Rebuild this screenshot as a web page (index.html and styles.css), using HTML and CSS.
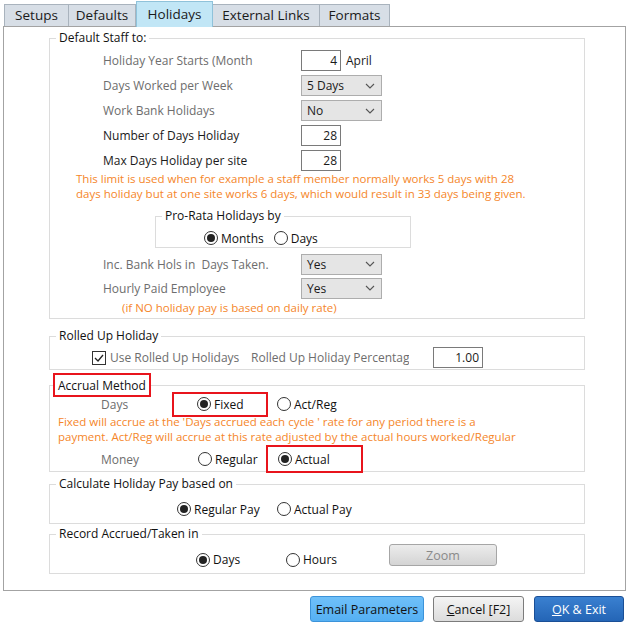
FILE: index.html
```html
<!DOCTYPE html>
<html lang="en">
<head>
    <meta charset="UTF-8">
    <title>Parameters - Holidays</title>
    <link rel="stylesheet" href="styles.css">
</head>
<body>
    <div class="window">
        <div class="tabs">
            <div class="tab tab-setups">Setups</div>
            <div class="tab tab-defaults">Defaults</div>
            <div class="tab tab-holidays active">Holidays</div>
            <div class="tab tab-links">External Links</div>
            <div class="tab tab-formats">Formats</div>
        </div>

        <div class="panel">
            <!-- default staff settings -->
            <fieldset class="group staff">
                <legend>Default Staff to:</legend>
                <div class="row">
                    <span class="lbl">Holiday Year Starts (Month</span>
                    <span class="field">4</span>
                    <span class="after">April</span>
                </div>
                <div class="row">
                    <span class="lbl">Days Worked per Week</span>
                    <span class="combo">5 Days<svg width="10" height="6" viewBox="0 0 10 6"><path d="M1 1l4 4 4-4" fill="none" stroke="#555" stroke-width="1.1"/></svg></span>
                </div>
                <div class="row">
                    <span class="lbl">Work Bank Holidays</span>
                    <span class="combo">No<svg width="10" height="6" viewBox="0 0 10 6"><path d="M1 1l4 4 4-4" fill="none" stroke="#555" stroke-width="1.1"/></svg></span>
                </div>
                <div class="row">
                    <span class="lbl dark">Number of Days Holiday</span>
                    <span class="field">28</span>
                </div>
                <div class="row">
                    <span class="lbl dark">Max Days Holiday per site</span>
                    <span class="field">28</span>
                </div>
                <p class="note note-limit">This limit is used when for example a staff member normally works 5 days with 28<br>days holiday but at one site works 6 days, which would result in 33 days being given.</p>

                <fieldset class="group prorata">
                    <legend>Pro-Rata Holidays by</legend>
                    <div class="radios prorata-opts">
                        <label class="radio on opt-months"><span class="dot"></span>Months</label>
                        <label class="radio"><span class="dot"></span>Days</label>
                    </div>
                </fieldset>

                <div class="row row-sm first">
                    <span class="lbl">Inc. Bank Hols in&nbsp; Days Taken.</span>
                    <span class="combo">Yes<svg width="10" height="6" viewBox="0 0 10 6"><path d="M1 1l4 4 4-4" fill="none" stroke="#555" stroke-width="1.1"/></svg></span>
                </div>
                <div class="row row-sm">
                    <span class="lbl">Hourly Paid Employee</span>
                    <span class="combo">Yes<svg width="10" height="6" viewBox="0 0 10 6"><path d="M1 1l4 4 4-4" fill="none" stroke="#555" stroke-width="1.1"/></svg></span>
                </div>
                <p class="note note-hourly">(if NO holiday pay is based on daily rate)</p>
            </fieldset>

            <!-- rolled up holiday -->
            <fieldset class="group rolled">
                <legend>Rolled Up Holiday</legend>
                <div class="rolled-row">
                    <label class="check"><span class="box"><svg width="12" height="12" viewBox="0 0 12 12"><path d="M2 6l3 3 5-6" fill="none" stroke="#222" stroke-width="1.3"/></svg></span>Use Rolled Up Holidays</label>
                    <span class="clip">Rolled Up Holiday Percentage</span>
                    <span class="field wide">1.00</span>
                </div>
            </fieldset>

            <!-- accrual method -->
            <fieldset class="group accrual">
                <legend class="mark">Accrual Method</legend>
                <div class="acc-row acc-days">
                    <span class="acc-lbl">Days</span>
                    <span class="cell cell-fixed mark"><label class="radio on"><span class="dot"></span>Fixed</label></span>
                    <label class="radio opt-actreg"><span class="dot"></span>Act/Reg</label>
                </div>
                <p class="note note-accrual">Fixed will accrue at the 'Days accrued each cycle ' rate for any period there is a<br>payment. Act/Reg will accrue at this rate adjusted by the actual hours worked/Regular</p>
                <div class="acc-row acc-money">
                    <span class="acc-lbl money-lbl">Money</span>
                    <span class="cell cell-regular"><label class="radio"><span class="dot"></span>Regular</label></span>
                    <span class="cell cell-actual mark"><label class="radio on"><span class="dot"></span>Actual</label></span>
                </div>
            </fieldset>

            <!-- holiday pay basis -->
            <fieldset class="group calc">
                <legend>Calculate Holiday Pay based on</legend>
                <div class="radios calc-opts">
                    <span class="cell cell-regpay"><label class="radio on"><span class="dot"></span>Regular Pay</label></span>
                    <label class="radio"><span class="dot"></span>Actual Pay</label>
                </div>
            </fieldset>

            <!-- units -->
            <fieldset class="group record">
                <legend>Record Accrued/Taken in</legend>
                <div class="record-row">
                    <span class="cell cell-days"><label class="radio on"><span class="dot"></span>Days</label></span>
                    <span class="cell cell-hours"><label class="radio"><span class="dot"></span>Hours</label></span>
                    <button class="btn-zoom" disabled>Zoom</button>
                </div>
            </fieldset>
        </div>

        <div class="actions">
            <button class="btn btn-email">Email Parameters</button>
            <button class="btn btn-cancel"><u>C</u>ancel [F2]</button>
            <button class="btn btn-ok"><u>O</u>K &amp; Exit</button>
        </div>
    </div>
</body>
</html>
```

FILE: styles.css
```css
body {
    margin: 0;
    background: #fff;
    font-family: "Segoe UI", "Open Sans", sans-serif;
    font-size: 12px;
    color: #1a1a1a;
}
.window {
    width: 630px;
    height: 632px;
    padding-top: 1px;
    box-sizing: border-box;
}

/* tab strip */
.tabs {
    display: flex;
    align-items: flex-end;
    height: 25px;
    margin-left: 4px;
}
.tab {
    height: 22px;
    line-height: 21px;
    font-size: 13.5px;
    text-align: center;
    color: #1a1a1a;
    background: #d7dee6;
    border: 1px solid #a9b3bd;
    border-bottom: none;
    box-sizing: border-box;
}
.tab + .tab {
    border-left: none;
}
.tab-setups { width: 65px; }
.tab-defaults { width: 67px; }
.tab-holidays { width: 77px; }
.tab-links { width: 107px; }
.tab-formats { width: 70px; }
.tab.active {
    height: 26px;
    line-height: 24px;
    margin-bottom: -1px;
    background: #c1e6f6;
    border: 1px solid #8fc2da;
    border-bottom: none;
    position: relative;
    z-index: 1;
}

.panel {
    margin-left: 3px;
    width: 623px;
    height: 565px;
    border: 1px solid #a3a3a3;
    padding: 3px 40px 0 45px;
    box-sizing: border-box;
}

/* group boxes */
.group {
    margin: 0;
    padding: 0;
    min-width: 0;
    border: 1px solid #dcdcdc;
}
.group legend {
    margin-left: 6px;
    padding: 0 3px;
    line-height: 16px;
    color: #111;
}

.row {
    display: flex;
    align-items: center;
    height: 25px;
    padding-left: 53px;
}
.staff .row:first-of-type {
    margin-top: 2px;
}
.row-sm {
    height: 24px;
}
.row-sm.first {
    margin-top: 4px;
}
.lbl {
    width: 198px;
    color: #6d6d6d;
    white-space: nowrap;
}
.lbl.dark {
    color: #1a1a1a;
}
.field {
    width: 40px;
    height: 21px;
    line-height: 19px;
    padding-right: 3px;
    text-align: right;
    background: #fff;
    border: 1px solid #7a7a7a;
    box-sizing: border-box;
}
.field.wide {
    width: 50px;
}
.after {
    margin-left: 5px;
}
.combo {
    width: 81px;
    height: 21px;
    display: flex;
    align-items: center;
    justify-content: space-between;
    padding: 0 6px 0 5px;
    background: #e5e5e5;
    border: 1px solid #adadad;
    box-sizing: border-box;
}

.note {
    margin: 0;
    color: #f5862a;
    font-size: 11.5px;
    line-height: 15px;
    white-space: nowrap;
}
.note-limit {
    margin-top: -2px;
    padding-left: 26px;
}
.note-hourly {
    padding-left: 72px;
    padding-bottom: 3px;
}

.prorata {
    margin: 7px 0 0 105px;
    width: 256px;
    box-sizing: border-box;
}
.radios {
    display: flex;
    align-items: center;
    height: 18px;
}
.prorata-opts {
    padding: 5px 0 0 48px;
}
.opt-months {
    margin-right: 10px;
}

/* radio buttons and check box */
.radio {
    display: inline-flex;
    align-items: center;
    gap: 3px;
    color: #111;
    white-space: nowrap;
}
.dot {
    width: 14px;
    height: 14px;
    border: 1px solid #333;
    border-radius: 50%;
    background: #fff;
    box-sizing: border-box;
    display: grid;
    place-items: center;
}
.radio.on .dot::after {
    content: "";
    width: 8px;
    height: 8px;
    border-radius: 50%;
    background: #222;
}
.check {
    width: 159px;
    display: inline-flex;
    align-items: center;
    gap: 4px;
    color: #6d6d6d;
    white-space: nowrap;
}
.box {
    width: 14px;
    height: 14px;
    border: 1px solid #333;
    background: #fff;
    box-sizing: border-box;
    display: grid;
    place-items: center;
}

.rolled {
    margin-top: 9px;
}
.rolled-row {
    display: flex;
    align-items: center;
    height: 21px;
    padding: 3px 0 1px 42px;
}
.clip {
    width: 158px;
    overflow: hidden;
    white-space: nowrap;
    color: #6d6d6d;
}
.rolled-row .field {
    margin-left: 24px;
}

/* red marker boxes */
.mark {
    outline: 2px solid #e8141c;
}

.accrual {
    margin-top: 5px;
}
.accrual legend.mark {
    margin-left: 5px;
    padding: 3px 3px 1px 3px;
}
.acc-row {
    display: flex;
    align-items: center;
    padding-left: 51px;
}
.acc-days {
    height: 20px;
    margin-top: -1px;
}
.acc-lbl {
    width: 73px;
    color: #6d6d6d;
}
.money-lbl {
    width: 97px;
}
.cell {
    display: flex;
    align-items: center;
    box-sizing: border-box;
}
.cell-fixed {
    width: 92px;
    height: 21px;
    padding-left: 23px;
}
.opt-actreg {
    margin-left: 11px;
}
.note-accrual {
    padding-left: 8px;
}
.acc-money {
    height: 24px;
    margin-top: 3px;
}
.cell-regular {
    width: 70px;
}
.cell-actual {
    width: 93px;
    height: 24px;
    padding-left: 10px;
}

.calc {
    margin-top: 4px;
}
.calc-opts {
    padding: 8px 0 5px 127px;
}
.cell-regpay {
    width: 100px;
}

.record {
    margin-top: 2px;
}
.record-row {
    display: flex;
    align-items: flex-end;
    height: 24px;
    padding: 2px 0 5px 146px;
}
.cell-days {
    width: 90px;
    height: 17px;
}
.cell-hours {
    width: 103px;
    height: 17px;
}
.btn-zoom {
    align-self: flex-start;
    width: 108px;
    height: 22px;
    font: inherit;
    font-size: 12.5px;
    color: #8a8a8a;
    background: linear-gradient(#ececec, #d4d4d4);
    border: 1px solid #a6a6a6;
    border-radius: 3px;
}

/* dialog buttons */
.actions {
    display: flex;
    justify-content: flex-end;
    gap: 9px;
    margin-top: 5px;
    padding-right: 6px;
}
.btn {
    height: 26px;
    font: inherit;
    font-size: 12.5px;
    border-radius: 3px;
    padding: 0;
}
.btn-email {
    width: 114px;
    color: #111;
    background: linear-gradient(#6fc0f9, #55b0f3);
    border: 1px solid #3c93d9;
}
.btn-cancel {
    width: 91px;
    color: #111;
    background: linear-gradient(#f4f4f4, #dcdcdc);
    border: 1px solid #7c7c7c;
}
.btn-ok {
    width: 90px;
    margin-left: 1px;
    color: #fff;
    background: linear-gradient(#3a80d0, #2465b6);
    border: 1px solid #1a4f96;
}
```
